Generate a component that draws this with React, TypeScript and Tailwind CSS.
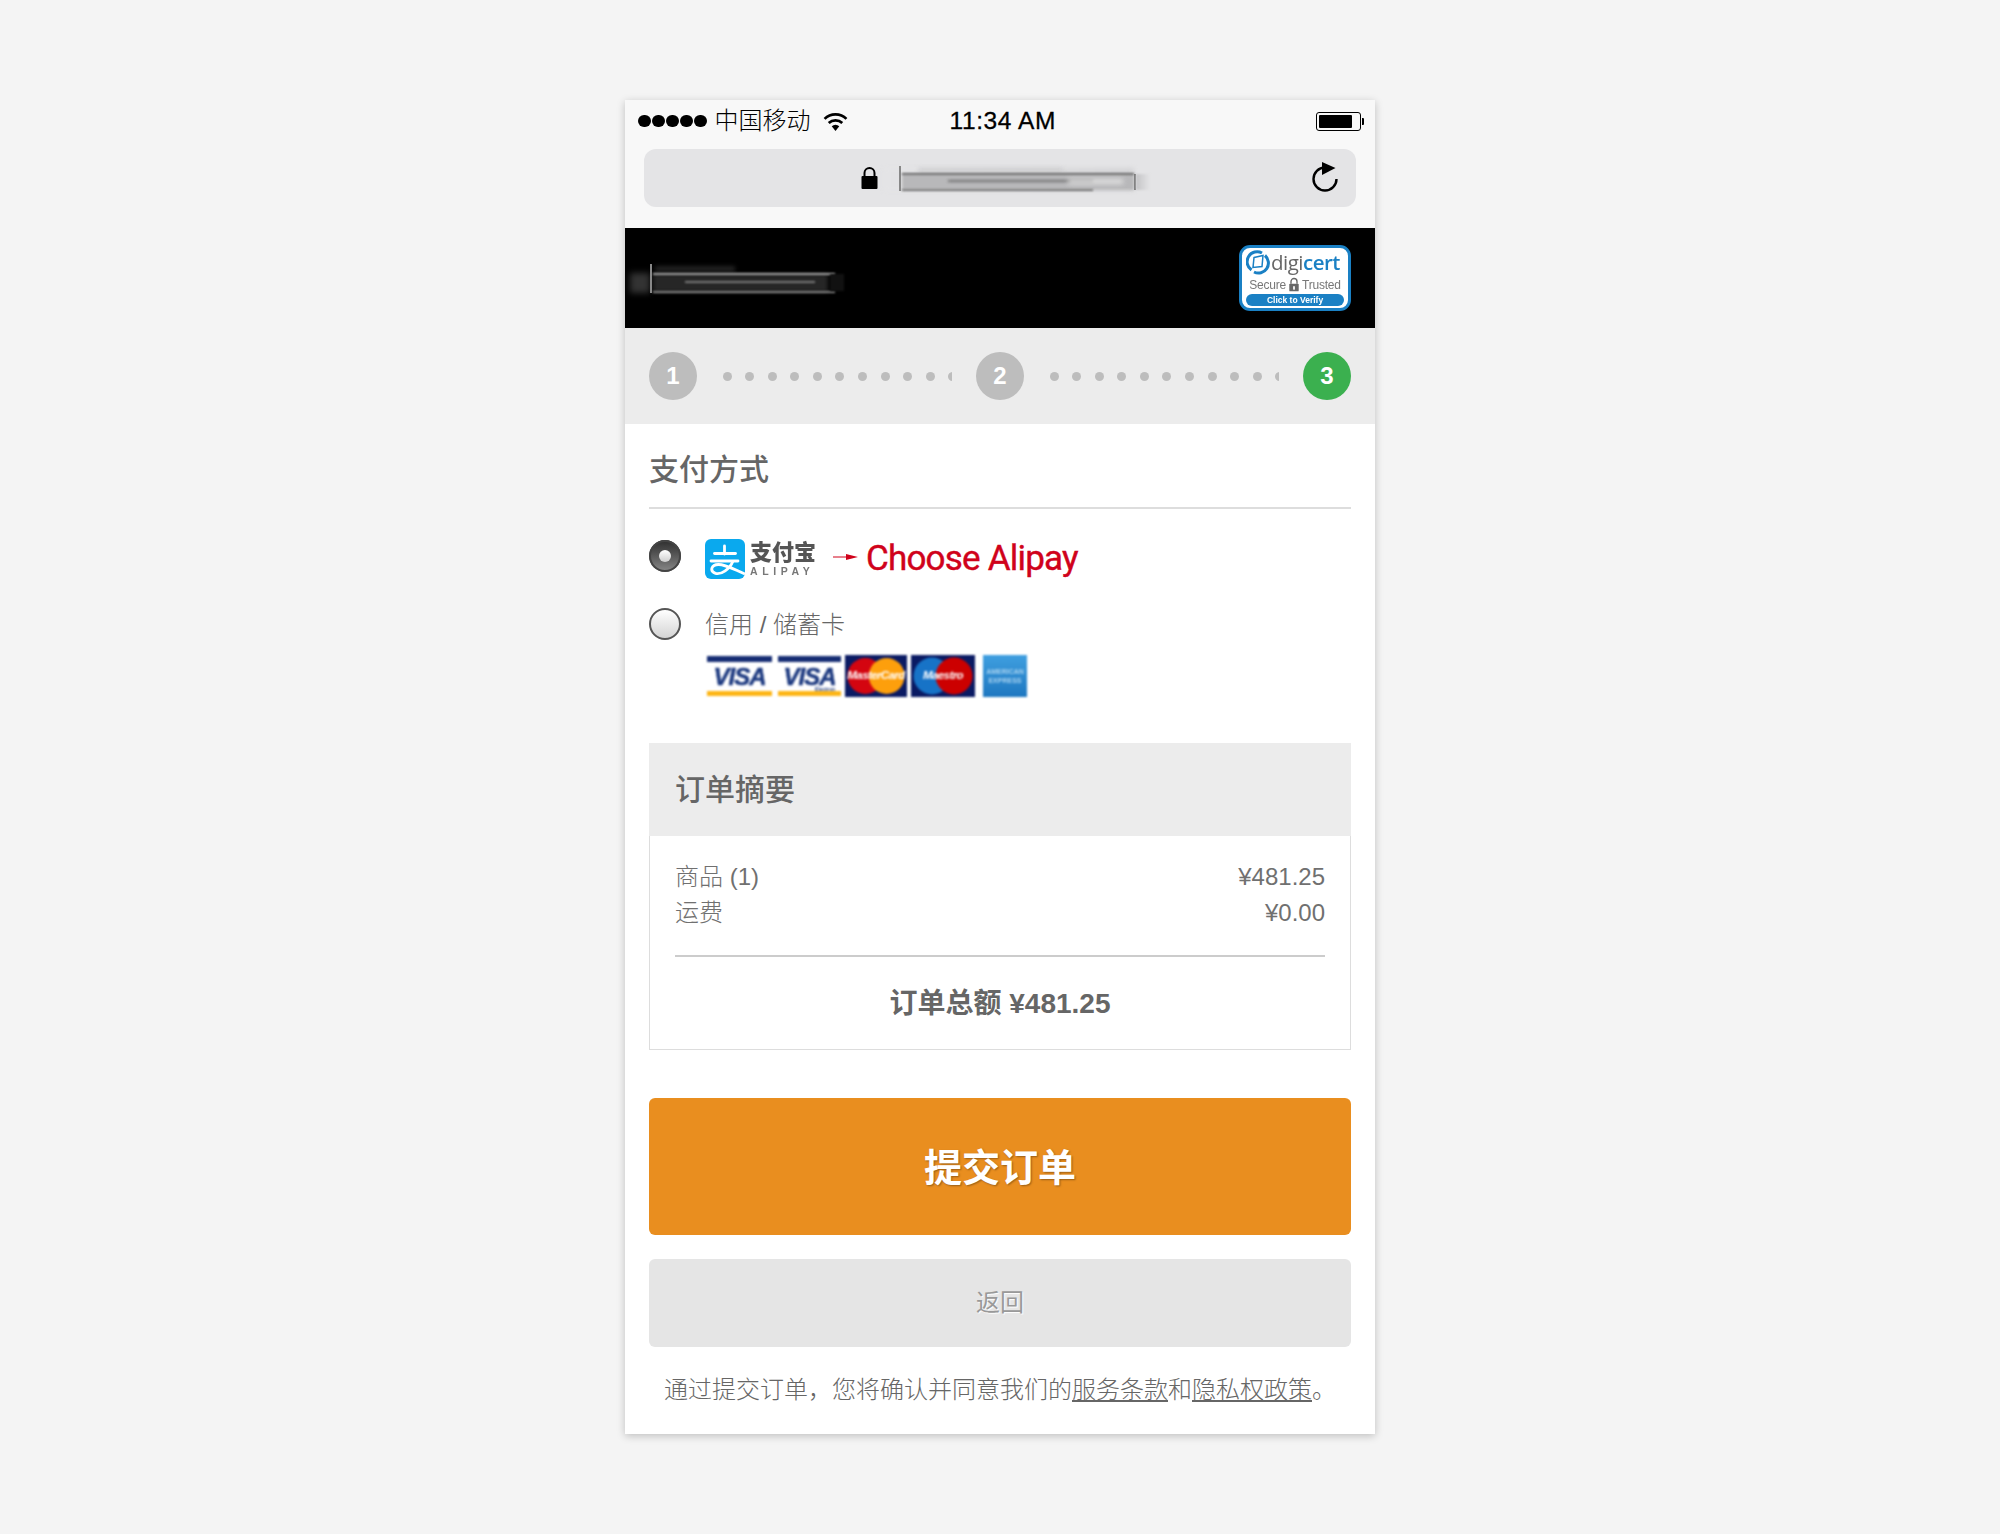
import React from "react";

const dots = Array.from({ length: 11 });

function Dots() {
  return (
    <div className="flex w-[230px] gap-[13.6px] overflow-hidden pl-[1px]">
      {dots.map((_, i) => (
        <span key={i} className="h-[9px] w-[9px] shrink-0 rounded-full bg-[#bdbdbd]" />
      ))}
    </div>
  );
}

function Step({ n, active }: { n: number; active?: boolean }) {
  return (
    <div className={`flex h-[48px] w-[48px] shrink-0 items-center justify-center rounded-full text-[24px] font-bold text-white ${active ? "bg-[#3bb04f]" : "bg-[#bdbdbd]"}`}>
      {n}
    </div>
  );
}

function Radio({ checked }: { checked?: boolean }) {
  return checked ? (
    <div className="mt-[1px] flex h-[32px] w-[32px] shrink-0 items-center justify-center rounded-full bg-gradient-to-b from-[#2e2e2e] to-[#8a8a8a] shadow-[inset_0_0_0_2px_#444]">
      <span className="h-[12px] w-[12px] rounded-full bg-gradient-to-b from-[#ffffff] to-[#cfcfcf]" />
    </div>
  ) : (
    <div className="h-[32px] w-[32px] shrink-0 rounded-full border-2 border-[#555] bg-gradient-to-b from-[#ffffff] to-[#d4d4d4]" />
  );
}

function Visa({ small, w }: { small?: boolean; w: string }) {
  return (
    <div className={`flex h-[42px] flex-col justify-between bg-white ${w}`}>
      <div className="mt-[1px] h-[6px] bg-[#152c73]" />
      <div className="relative flex flex-1 items-center justify-center text-[24px] leading-none font-bold tracking-[-1px] text-[#1d3a80] italic [-webkit-text-stroke:0.5px_#1d3a80]">
        VISA
        {small && <span className="absolute right-[6px] bottom-[-1px] text-[5px] tracking-normal not-italic [-webkit-text-stroke:0]">Electron</span>}
      </div>
      <div className="mb-[1px] h-[5px] bg-[#fdb515]" />
    </div>
  );
}

function Circles({ left, right, label, w }: { left: string; right: string; label: string; w: string }) {
  return (
    <div className={`relative flex h-[42px] items-center justify-center overflow-hidden bg-[#0a1a63] ${w}`}>
      <svg viewBox="0 0 64 42" className="absolute inset-0 h-full w-full">
        <circle cx="21" cy="21" r="18.5" fill={left} />
        <circle cx="43" cy="21" r="18.5" fill={right} />
      </svg>
      <span className="relative text-[11.500px] leading-none font-bold tracking-[-0.6px] text-white italic">{label}</span>
    </div>
  );
}

function Cards() {
  return (
    <div className="mt-[14px] ml-[58px] flex h-[42px] items-center blur-[0.8px]">
      <Visa w="w-[65px]" />
      <div className="w-[6px]" />
      <Visa small w="w-[63px]" />
      <div className="w-[4px]" />
      <Circles left="#d40510" right="#fd9f0c" label="MasterCard" w="w-[62px]" />
      <div className="w-[4px]" />
      <Circles left="#1773c7" right="#cc0000" label="Maestro" w="w-[64px]" />
      <div className="w-[8px]" />
      <div className="flex h-[42px] w-[44px] flex-col items-center justify-center bg-gradient-to-b from-[#3f9fe0] to-[#1d77c0] text-[7px] leading-[9px] font-bold text-[#a9d3f0]">
        <span>AMERICAN</span>
        <span>EXPRESS</span>
      </div>
    </div>
  );
}

function Digicert() {
  return (
    <div className="flex h-[66px] w-[112px] flex-col overflow-hidden rounded-[11px] border-[3px] border-[#1a80c4] bg-white px-[4px] blur-[0.3px]">
      <div className="flex h-[27px] items-center pt-[2px]">
        <svg viewBox="0 0 24 24" className="h-[25px] w-[24px] shrink-0" fill="none" stroke="#1a80c4" strokeWidth="3">
          <path d="M16 2.5 A10 10 0 0 0 5.5 19.5" />
          <path d="M8 21.5 A10 10 0 0 0 19 5" />
          <path d="M8 7 L17 5 L16 16 L7 17 Z" strokeWidth="1.5" />
        </svg>
        <span className="ml-[1px] font-['Open_Sans',sans-serif] text-[20.5px] leading-none tracking-[-0.5px] text-[#666]">
          digi<span className="font-semibold text-[#1a80c4]">cert</span>
        </span>
      </div>
      <div className="flex h-[19px] items-center justify-center text-[12px] leading-none tracking-[-0.2px] text-[#777]">
        <span>Secure</span>
        <svg viewBox="0 0 14 16" className="mx-[2px] h-[15px] w-[12px]">
          <path d="M3.5 7V4.5a3.5 3.5 0 0 1 7 0V7" fill="none" stroke="#666" strokeWidth="1.6" />
          <rect x="1.5" y="7" width="11" height="9" rx="1" fill="#666" />
          <rect x="6" y="10" width="2" height="4" fill="#fff" />
        </svg>
        <span>Trusted</span>
      </div>
      <div className="flex h-[12px] items-center justify-center rounded-full bg-[#1a80c4] text-[8.5px] leading-none font-bold text-white">Click to Verify</div>
    </div>
  );
}

function UrlSmudge() {
  return (
    <div className="relative h-[25px] w-[275px] shrink-0 blur-[0.6px]">
      <div className="absolute top-[2px] bottom-0 left-[6px] w-[250px] bg-gradient-to-r from-[#e4e4e6] to-[#d4d4d6] blur-[2px]" />
      <div className="absolute top-[2px] right-[90px] left-[40px] h-[5px] bg-[#cfcfd1] blur-[2px]" />
      <div className="absolute top-[8px] bottom-[1px] left-[24px] w-[232px] bg-[#b8b8ba] blur-[1.5px]" />
      <div className="absolute top-0 bottom-0 left-[21px] w-[2px] bg-[#888] blur-[0.5px]" />
      <div className="absolute top-[8px] bottom-[1px] left-[256px] w-[2px] bg-[#7d7d7d] blur-[0.6px]" />
      <div className="absolute top-[7px] right-[19px] left-[24px] h-[2px] bg-[#6a6a6a] blur-[0.8px]" />
      <div className="absolute right-[60px] bottom-[0px] left-[24px] h-[2px] bg-[#777] blur-[0.8px]" />
      <div className="absolute top-[14px] right-[60px] left-[70px] h-[2px] bg-[#6f6f6f] blur-[1.5px]" />
      <div className="absolute top-[13px] right-[30px] left-[190px] h-[5px] bg-[#e0e0e0] blur-[2.5px]" />
      <div className="absolute top-[8px] bottom-[1px] left-[258px] w-[14px] bg-gradient-to-r from-[#c4c4c6] to-[#e4e4e6] blur-[1px]" />
    </div>
  );
}

function LogoSmudge() {
  return (
    <div className="relative h-[29px] w-[225px] shrink-0 blur-[0.6px]">
      <div className="absolute top-[9px] bottom-0 left-[5px] w-[20px] bg-[#333] blur-[3px]" />
      <div className="absolute top-[2px] left-[30px] h-[6px] w-[80px] bg-[#222] blur-[2px]" />
      <div className="absolute top-[10px] bottom-[1px] left-[28px] w-[175px] bg-[#262626] blur-[2px]" />
      <div className="absolute top-0 bottom-0 left-[25px] w-[2px] bg-[#888] blur-[0.5px]" />
      <div className="absolute top-[9px] left-[28px] h-[2px] w-[182px] bg-[#aaa] blur-[0.8px]" />
      <div className="absolute bottom-[0px] left-[28px] h-[2px] w-[182px] bg-[#888] blur-[0.8px]" />
      <div className="absolute top-[17px] left-[60px] h-[2px] w-[130px] bg-[#7a7a7a] blur-[1.2px]" />
      <div className="absolute top-[10px] left-[205px] h-[17px] w-[14px] bg-[#111] blur-[1px]" />
    </div>
  );
}

function AlipayLogo() {
  return (
    <div className="ml-[24px] flex shrink-0 items-start blur-[0.4px]">
      <svg viewBox="0 0 40 40" className="h-[40px] w-[40px]">
        <rect width="40" height="40" rx="6" fill="#0aa9ee" />
        <g fill="none" stroke="#fff" strokeWidth="2.8" strokeLinecap="round">
          <path d="M19.5 7v8" />
          <path d="M9.5 14.5h21" />
          <path d="M6 22h27" />
        </g>
        <path d="M28 22C25 30 16 36 10.500 34.300C4.500 32.400 6 25.500 13.500 25.500C21 25.500 30 31 40 35" fill="none" stroke="#fff" strokeWidth="2.8" />
      </svg>
      <div className="ml-[5px] flex w-[66px] flex-col items-start">
        <span className="text-[22px] leading-[27px] font-black text-[#555]">支付宝</span>
        <span className="text-[10.500px] leading-[11px] font-bold tracking-[4.6px] whitespace-nowrap text-[#777]">ALIPAY</span>
      </div>
    </div>
  );
}

export default function App() {
  return (
    <div className="flex min-h-[1534px] justify-center bg-[#f4f4f4] pt-[100px] [font-family:'Liberation_Sans','Noto_Sans_CJK_SC',sans-serif]">
      <div className="h-[1334px] w-[750px] bg-white text-[#666] shadow-[0_2px_8px_rgba(0,0,0,0.22)]">
        {/* browser chrome */}
        <div className="h-[128px] bg-[#f8f8f8] text-black">
          <div className="flex h-[49px] items-center pr-[11px] pb-[7px] pl-[13px]">
            <div className="flex gap-[1.5px]">
              {[0, 1, 2, 3, 4].map((i) => (
                <span key={i} className="h-[12.5px] w-[12.5px] rounded-full bg-black" />
              ))}
            </div>
            <span className="ml-[8px] text-[24px] leading-none font-light">中国移动</span>
            <svg viewBox="0 0 24 18" className="ml-[12px] h-[19px] w-[25px]" fill="none" stroke="#000" strokeWidth="2.6">
              <path d="M1.5 6.500a15 15 0 0 1 21 0" />
              <path d="M5.500 10.500a9.500 9.500 0 0 1 13 0" />
              <path d="M12 18l-3.600-4.400a5 5 0 0 1 7.200 0z" fill="#000" stroke="none" />
            </svg>
            <span className="ml-[102px] text-[24.500px] leading-none tracking-[0.6px] [-webkit-text-stroke:0.3px_#000]">11:34 AM</span>
            <div className="ml-auto flex items-center">
              <div className="h-[19px] w-[45px] rounded-[3px] border border-black p-[2px]">
                <div className="h-full w-[33px] rounded-[1px] bg-black" />
              </div>
              <div className="ml-[1px] h-[7px] w-[2px] rounded-r-[1px] bg-black" />
            </div>
          </div>
          <div className="relative mx-[19px] flex h-[58px] items-center rounded-[12px] bg-[#e4e4e6] pl-[217px]">
            <svg viewBox="0 0 17 22" className="h-[22px] w-[17px] shrink-0">
              <path d="M3.500 10V6a5 5 0 0 1 10 0v4" fill="none" stroke="#000" strokeWidth="2" />
              <rect x="0.5" y="9" width="16" height="13" rx="1" fill="#000" />
            </svg>
            <UrlSmudge />
            <svg viewBox="0 0 28 30" className="absolute top-[13px] right-[16px] h-[30px] w-[28px]" fill="none">
              <path d="M13 5.500A11.500 11.500 0 1 0 24.500 17" stroke="#000" strokeWidth="2.400" />
              <path d="M10 0l13.500 6L10 13z" fill="#000" />
            </svg>
          </div>
        </div>

        {/* header */}
        <div className="flex h-[100px] items-center justify-between bg-black pr-[24px]">
          <LogoSmudge />
          <Digicert />
        </div>

        {/* steps */}
        <div className="flex h-[96px] items-center justify-between bg-[#ececec] px-[24px]">
          <Step n={1} />
          <Dots />
          <Step n={2} />
          <Dots />
          <Step n={3} active />
        </div>

        <div className="px-[24px]">
          {/* payment method */}
          <h2 className="flex h-[85px] items-center border-b-2 border-[#ddd] pt-[8px] text-[30px] leading-none font-medium">支付方式</h2>

          <div className="mt-[30px] flex h-[40px] items-start">
            <Radio checked />
            <AlipayLogo />
            <svg viewBox="0 0 26 8" className="mt-[14px] ml-[17px] h-[8px] w-[26px] shrink-0">
              <path d="M0 4h14" stroke="#d0021b" strokeWidth="1" />
              <path d="M13 1l12 3-12 3z" fill="#d0021b" />
            </svg>
            <span className="mt-[2px] ml-[7px] font-['Roboto',sans-serif] text-[35px] leading-none tracking-[-0.8px] text-[#d0021b] [-webkit-text-stroke:0.4px_#d0021b]">Choose Alipay</span>
          </div>

          <div className="mt-[28px] flex h-[34px] items-center">
            <Radio />
            <span className="ml-[24px] pt-[2px] text-[24px] leading-none font-light">信用 / 储蓄卡</span>
          </div>

          <Cards />

          {/* order summary */}
          <div className="mt-[46px] h-[307px] border border-t-0 border-[#ddd]">
            <div className="-mx-px flex h-[93px] items-center bg-[#ececec] px-[26px] text-[30px] leading-none font-medium">订单摘要</div>
            <div className="px-[25px]">
              <div className="pt-[23px] text-[24px] leading-[36px] font-light text-[#707070]">
                <div className="flex justify-between">
                  <span>商品 (1)</span>
                  <span>¥481.25</span>
                </div>
                <div className="flex justify-between">
                  <span>运费</span>
                  <span>¥0.00</span>
                </div>
              </div>
              <div className="mt-[24px] h-[2px] bg-[#ccc]" />
              <div className="mt-[33px] text-center text-[28px] leading-none font-bold">订单总额 ¥481.25</div>
            </div>
          </div>

          {/* actions */}
          <button className="mt-[48px] block h-[137px] w-full rounded-[6px] bg-[#e98e1f] pt-[3px] text-[38px] font-bold text-white [text-shadow:1px_1px_2px_rgba(0,0,0,0.35)]">提交订单</button>
          <button className="mt-[24px] block h-[88px] w-full rounded-[6px] bg-[#e5e5e5] text-[24px] text-[#999] [text-shadow:1px_1px_1px_#fff]">返回</button>
          <p className="mt-[27px] text-center text-[24px] leading-[32px] font-light whitespace-nowrap">
            通过提交订单，您将确认并同意我们的<span className="underline">服务条款</span>和<span className="underline">隐私权政策</span>。
          </p>
        </div>
      </div>
    </div>
  );
}
